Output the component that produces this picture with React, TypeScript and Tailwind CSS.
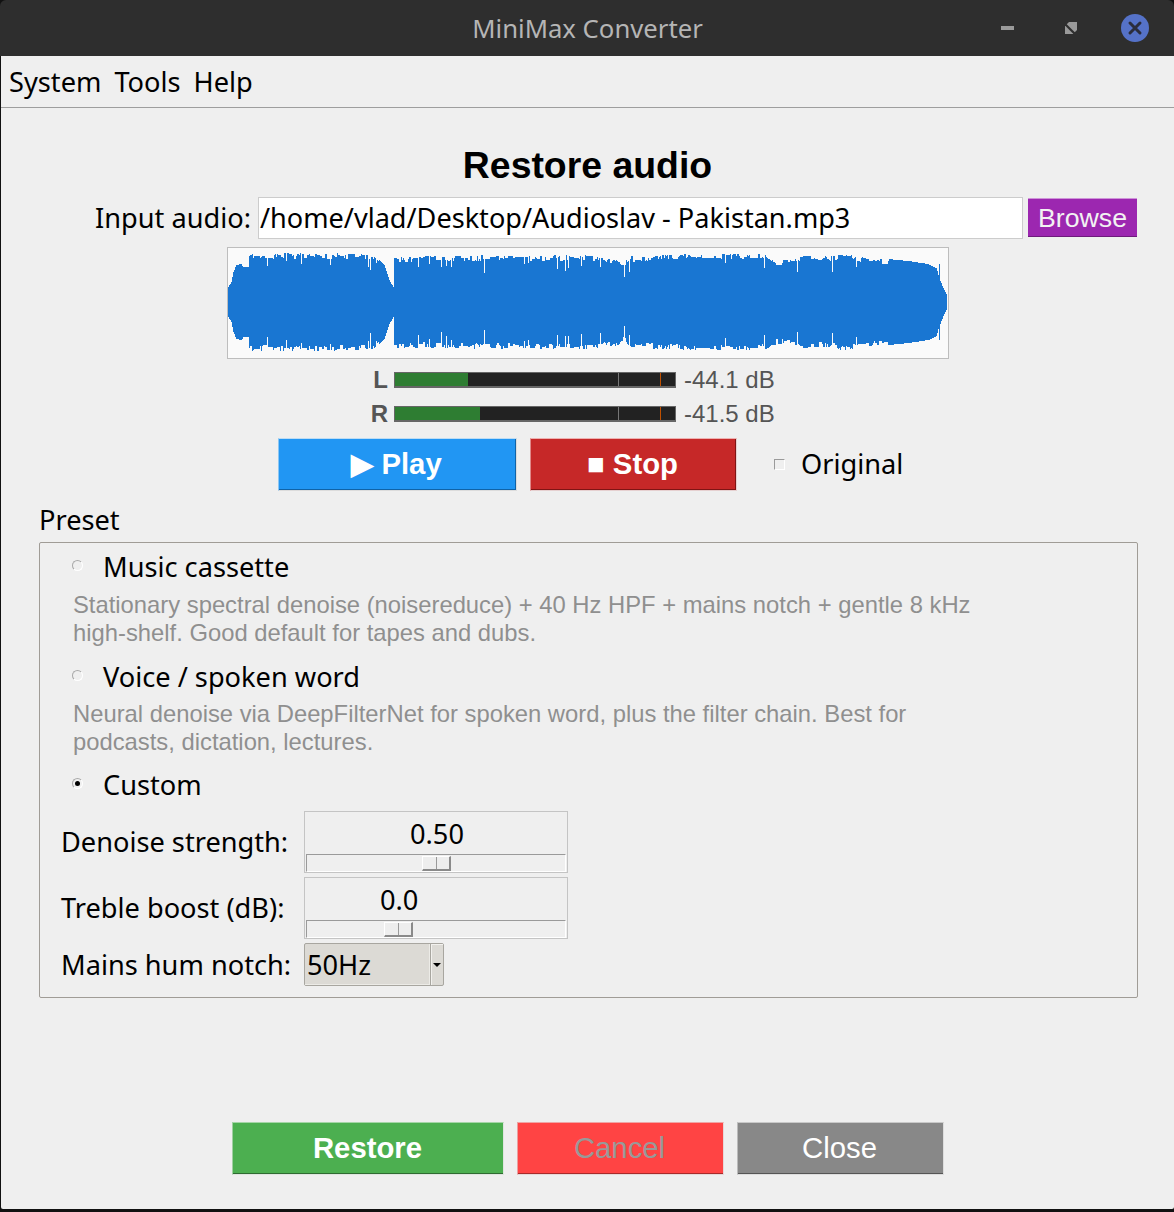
const NOTO = "font-['Noto_Sans',sans-serif]"
const ARIAL = "font-['Liberation_Sans',Arial,sans-serif]"

// half height of the wave at a given x, read off the reference
const envelope: [number, number][] = [
  [0, 15], [3, 20], [5, 30], [8, 37], [13, 38], [15, 35], [20, 35], [21, 49], [125, 49], [146, 47], [150, 43], [156, 37],
  [161, 22], [165, 15], [166, 46], [300, 47], [365, 47], [388, 44], [396, 40], [402, 46], [470, 49], [538, 48],
  [545, 43], [566, 42], [567, 47], [605, 46], [612, 49], [650, 44], [680, 41], [700, 38], [708, 34], [711, 24],
  [715, 14], [718, 8],
]

function envAt(x: number) {
  for (let i = 1; i < envelope.length; i++) {
    const [x0, h0] = envelope[i - 1]
    const [x1, h1] = envelope[i]
    if (x <= x1) return h0 + ((h1 - h0) * (x - x0)) / (x1 - x0 || 1)
  }
  return 8
}

function buildWave() {
  let seed = 7
  const rnd = () => {
    seed = (seed * 1664525 + 1013904223) % 4294967296
    return seed / 4294967296
  }
  let d = ''
  let a = 0
  let b = 0
  for (let x = 0; x < 719; x++) {
    const e = envAt(x)
    // the fades are smooth, the loud parts are jagged
    const calm = x < 21 || (x > 150 && x < 166) || x > 660
    // values hold for a pixel or two, so the edge looks stepped
    if (rnd() > 0.45) {
      a = rnd() * 6
      b = rnd() * 6
    }
    const dip = rnd() > 0.96 ? 6 + rnd() * 8 : 0
    const top = Math.round(49 - e + (calm ? 0 : a + dip))
    const bottom = Math.round(49 + e - (calm ? 0 : b + dip))
    d += `M${x + 0.5} ${top}V${bottom}`
  }
  // single spike just before the end
  d += 'M711.5 11V87'
  return d
}

const wavePath = buildWave()

function Waveform() {
  return (
    <div className="w-[722px] h-[112px] border border-[#bdbdbd] bg-[#fafafa] pt-[5px]">
      <svg width="720" height="100" viewBox="0 0 720 100" className="block" shapeRendering="crispEdges">
        <path d={wavePath} stroke="#1976d2" strokeWidth="1" fill="none" />
      </svg>
    </div>
  )
}

function Meter({ label, value, fill }: { label: string; value: string; fill: string }) {
  return (
    <div className={`flex items-center h-[34px] ${ARIAL}`}>
      <span className="w-[387px] text-right text-[24px] font-bold text-[#555555] leading-none">{label}</span>
      <div className="relative ml-[6px] w-[282px] h-[16px] border border-[#666666] border-b-2 bg-[#222222]">
        <div className={`h-[13px] bg-[#2e7d32] ${fill}`} />
        <div className="absolute left-[223px] top-0 w-[1px] h-[13px] bg-[#777777]" />
        <div className="absolute left-[265px] top-0 w-[1px] h-[13px] bg-[#c05000]" />
      </div>
      <span className="ml-[8px] text-[24px] leading-none text-[#555555]">{value}</span>
    </div>
  )
}

function Radio({ checked }: { checked?: boolean }) {
  return (
    <span className="flex items-center justify-center w-[11px] h-[11px] rounded-full border border-[#a8a8a8] border-b-white border-r-white bg-[#efefef]">
      {checked && <span className="w-[5px] h-[5px] rounded-full bg-black" />}
    </span>
  )
}

function PresetOption({ label, desc, checked, descClass }: { label: string; desc?: string[]; checked?: boolean; descClass?: string }) {
  return (
    <div>
      <div className={`flex items-center h-[36px] ${NOTO}`}>
        <span className="ml-[32px] -mt-[2px]">
          <Radio checked={checked} />
        </span>
        <span className="ml-[20px] pt-[2px] text-[27.2px] leading-none text-black">{label}</span>
      </div>
      {desc && (
        <div className={`ml-[33px] text-[23.8px] leading-[28px] text-[#8f8f8f] ${descClass} ${ARIAL}`}>
          {desc.map(line => (
            <div key={line}>{line}</div>
          ))}
        </div>
      )}
    </div>
  )
}

function SliderRow({ label, value, valueClass, handleClass, rowClass }: { label: string; value: string; valueClass: string; handleClass: string; rowClass: string }) {
  return (
    <div className={`flex ${rowClass} ${NOTO}`}>
      <span className="w-[264px] pl-[21px] pt-[13px] text-[27.2px] leading-[36px] text-black whitespace-nowrap">{label}</span>
      <div className="w-[264px] h-[62px] border border-[#c4c4c4] px-[1px]">
        <div className={`h-[42px] text-[27.2px] leading-[44px] text-black ${valueClass}`}>{value}</div>
        <div className="relative h-[18px] border border-[#9a9a9a] border-b-white border-r-white">
          <div className={`absolute top-[1px] flex w-[29px] h-[15px] border border-white border-r-2 border-b-2 border-r-[#8a8a8a] border-b-[#8a8a8a] bg-[#eeeeee] ${handleClass}`}>
            <span className="w-[14px] h-full border-r border-[#9a9a9a]" />
          </div>
        </div>
      </div>
    </div>
  )
}

function App() {
  return (
    <div className="w-[1174px] h-[1212px] bg-[#111111] overflow-hidden">
      <div className="flex flex-col w-[1174px] h-[1209px] pl-[1px] bg-[#111111]">
        {/* title bar */}
        <div className={`relative flex items-center justify-center h-[56px] -ml-[1px] bg-[#2e2e2e] rounded-t-[6px] ${NOTO}`}>
          <span className="pt-[2px] pl-[1px] text-[25.7px] text-[#b5b5b5] leading-none">MiniMax Converter</span>
          <div className="absolute left-[1001px] top-[26px] w-[13px] h-[4px] bg-[#9a9a9a]" />
          <svg className="absolute left-[1065px] top-[22px]" width="12" height="12" viewBox="0 0 12 12">
            <rect width="12" height="12" fill="#9a9a9a" />
            <path d="M-1 1 L11 13" stroke="#2e2e2e" strokeWidth="2.2" />
            <path d="M0 0 L4 0 L0 4 Z" fill="#2e2e2e" />
            <path d="M12 12 L8 12 L12 8 Z" fill="#2e2e2e" />
            <path d="M0 12 L0 7 L5 12 Z" fill="#9a9a9a" />
          </svg>
          <svg className="absolute left-[1121px] top-[14px]" width="28" height="28" viewBox="0 0 28 28">
            <circle cx="14" cy="14" r="14" fill="#5572c8" />
            <path d="M9 9 L19 19 M19 9 L9 19" stroke="#2b2d3c" strokeWidth="3" strokeLinecap="round" />
          </svg>
        </div>

        <div className="flex-1 flex flex-col bg-[#efefef] rounded-b-[2px]">
          {/* menu */}
          <div className={`flex items-center h-[52px] pl-[8px] gap-[13px] border-b border-[#9e9e9e] text-[27.2px] leading-none text-black ${NOTO}`}>
            <span>System</span>
            <span>Tools</span>
            <span>Help</span>
          </div>

          <h1 className={`mt-[36px] h-[42px] text-center text-[37.4px] leading-[42px] font-bold text-black ${ARIAL}`}>Restore audio</h1>

          {/* input row */}
          <div className={`mt-[11px] flex items-center h-[41px] ${NOTO}`}>
            <span className="w-[250px] text-right text-[27.2px] leading-none text-black whitespace-nowrap">Input audio:</span>
            <div className="ml-[7px] flex items-center w-[765px] h-[42px] pl-[1px] bg-white border border-[#cccccc] text-[27.1px] leading-none text-black">
              /home/vlad/Desktop/Audioslav - Pakistan.mp3
            </div>
            <button className={`ml-[5px] w-[109px] h-[39px] pt-[2px] bg-[#9c27b0] border-t border-t-[#cf93d9] border-b border-b-[#6d1b7b] text-[26.7px] leading-none text-[#f2f2f2] ${ARIAL}`}>
              Browse
            </button>
          </div>

          <div className="mt-[9px] pl-[226px]">
            <Waveform />
          </div>

          <div className="mt-[4px]">
            <Meter label="L" value="-44.1 dB" fill="w-[73px]" />
            <Meter label="R" value="-41.5 dB" fill="w-[85px]" />
          </div>

          {/* transport */}
          <div className={`mt-[7px] flex items-center h-[53px] pl-[277px] ${ARIAL}`}>
            <button className="flex items-center justify-center w-[239px] h-[53px] pb-[2px] pr-[2px] bg-[#2196f3] border border-[#dcdcdc] border-t-[#bcdcf4] border-l-[#8cc6f2] shadow-[inset_-1px_-1px_0_#0f63a8] text-[29.3px] font-bold leading-none text-white">
              ▶ Play
            </button>
            <button className="ml-[13px] flex items-center justify-center w-[207px] h-[53px] pb-[2px] pr-[2px] bg-[#c62828] border border-[#e6d0d0] border-t-[#eeb0b0] border-l-[#e08a8a] shadow-[inset_-1px_-1px_0_#7f1414] text-[29.3px] font-bold leading-none text-white">
              ■ Stop
            </button>
            <span className="ml-[37px] w-[11px] h-[11px] border border-[#9a9a9a] border-b-white border-r-white" />
            <span className={`ml-[16px] -mt-[1px] text-[27.2px] leading-none text-black ${NOTO}`}>Original</span>
          </div>

          <div className={`mt-[13px] h-[38px] pl-[38px] text-[27.2px] leading-[32px] text-black ${NOTO}`}>Preset</div>

          {/* preset group */}
          <div className="ml-[38px] w-[1099px] h-[456px] border border-[#a09c96] rounded-[2px] pt-[5px]">
            <PresetOption
              label="Music cassette"
              descClass="mt-[7px]"
              desc={[
                'Stationary spectral denoise (noisereduce) + 40 Hz HPF + mains notch + gentle 8 kHz',
                'high-shelf. Good default for tapes and dubs.',
              ]}
            />
            <div className="mt-[11px]">
              <PresetOption
                label="Voice / spoken word"
                descClass="mt-[6px]"
                desc={[
                  'Neural denoise via DeepFilterNet for spoken word, plus the filter chain. Best for',
                  'podcasts, dictation, lectures.',
                ]}
              />
            </div>
            <div className="mt-[10px]">
              <PresetOption label="Custom" checked />
            </div>
            <SliderRow rowClass="mt-[9px]" label="Denoise strength:" value="0.50" valueClass="pl-[104px]" handleClass="left-[115px]" />
            <SliderRow rowClass="mt-[4px]" label="Treble boost (dB):" value="0.0" valueClass="pl-[74px]" handleClass="left-[77px]" />
            <div className={`mt-[4px] flex items-center h-[43px] ${NOTO}`}>
              <span className="w-[264px] pl-[21px] text-[27.2px] leading-none text-black whitespace-nowrap">Mains hum notch:</span>
              <div className="flex w-[140px] h-[43px] bg-[#dcdad5] border border-[#a8a6a0] rounded-[2px]">
                <span className="flex-1 pl-[2px] text-[27.2px] leading-[42px] text-black border-r border-[#a8a6a0] shadow-[inset_-1px_-1px_0_#ecebe7]">50Hz</span>
                <span className="flex items-center justify-center w-[12px] shadow-[inset_1px_1px_0_#f2f1ee]">
                  <span className="w-0 h-0 border-x-[4px] border-x-transparent border-t-[4px] border-t-black" />
                </span>
              </div>
            </div>
          </div>

          {/* footer buttons */}
          <div className={`mt-[124px] flex h-[53px] pl-[231px] gap-[13px] text-[29.3px] leading-none ${ARIAL}`}>
            <button className="w-[272px] h-[53px] pb-[2px] pr-[1px] bg-[#4caf50] border border-[#dfe5df] border-t-[#a5d6a7] border-l-[#9fcfa1] shadow-[inset_0_-1px_0_#2e6b31] font-bold text-white">Restore</button>
            <button className="w-[207px] h-[53px] pb-[2px] pr-[2px] bg-[#ff4444] border border-[#e6d8d8] border-t-[#f0a5a5] border-l-[#eba0a0] shadow-[inset_0_-1px_0_#a82a2a] text-[#999999]">Cancel</button>
            <button className="w-[207px] h-[53px] pb-[2px] pr-[2px] bg-[#888888] border border-[#dddddd] border-t-[#c8c8c8] border-l-[#bbbbbb] shadow-[inset_0_-1px_0_#555555] text-white">Close</button>
          </div>
        </div>
      </div>
    </div>
  )
}

export default App
